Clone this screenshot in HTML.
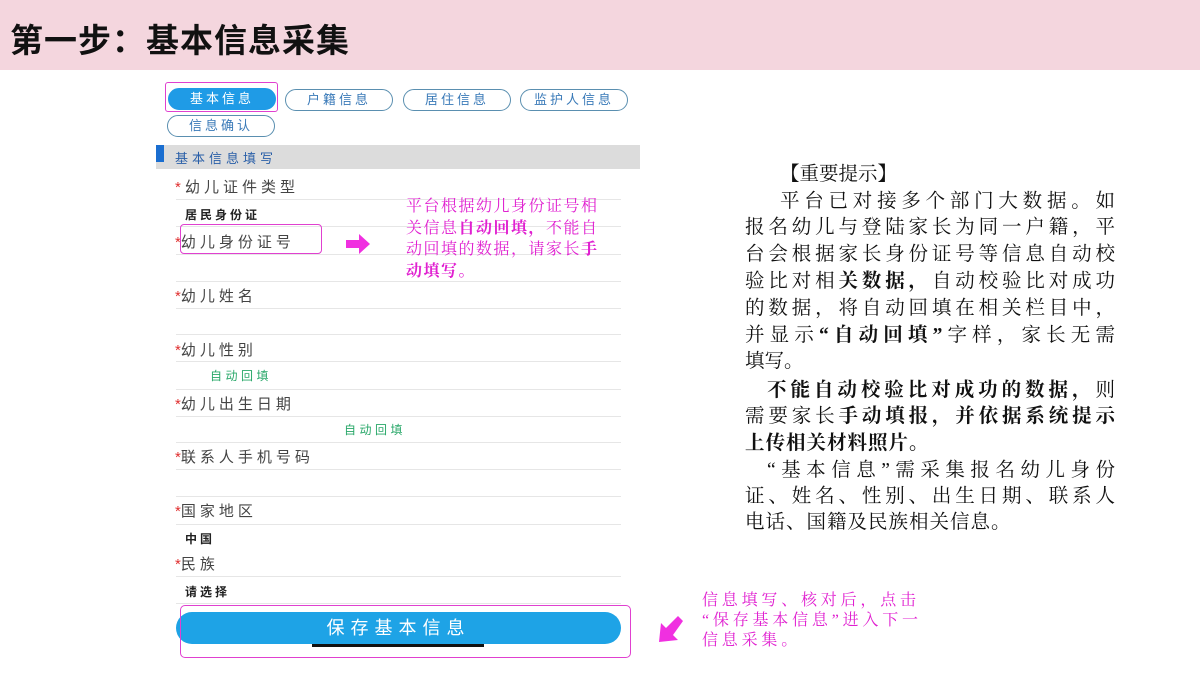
<!DOCTYPE html>
<html><head><meta charset="utf-8"><style>
*{margin:0;padding:0;box-sizing:border-box}
body{width:1200px;height:675px;position:relative;background:#fff;overflow:hidden;font-family:"Liberation Sans","Noto Sans CJK SC",sans-serif}
.a{position:absolute;white-space:nowrap}
.hdr{left:0;top:0;width:1200px;height:70px;background:#f4d6de}
.title{left:10px;top:14px;font-size:33px;font-weight:bold;color:#111;letter-spacing:1px}
.tab{position:absolute;height:22px;border:1.5px solid #5a8fb0;border-radius:11px;font-size:13px;color:#3a7ab8;text-align:center;line-height:19px;letter-spacing:3px}
.lbl{position:absolute;left:175px;font-size:15px;color:#444;letter-spacing:4px}
.lbl b{color:#e03030;font-weight:normal;letter-spacing:0}
.ln{position:absolute;left:176px;width:445px;height:1px;background:#e6e6e6}
.val{position:absolute;left:185px;font-size:12px;color:#222;font-weight:bold;letter-spacing:3px}
.g{position:absolute;font-size:12px;color:#2aa86a;letter-spacing:3.5px}
.r{position:absolute;left:745px;width:370px;font-family:"Liberation Serif","Noto Serif CJK SC",serif;font-size:19.5px;color:#111;text-align:justify;text-align-last:justify;white-space:nowrap;height:26px;line-height:26px}
.pk{color:#e020d0}
</style></head><body>
<div class="a hdr"></div>
<div class="a title">第一步：基本信息采集</div>

<div class="tab" style="left:168px;top:88px;width:108px;background:#1f9be6;border-color:#1f9be6;color:#fff">基本信息</div>
<div class="a" style="left:165px;top:82px;width:113px;height:30px;border:1.5px solid #e040d0;border-radius:3px"></div>
<div class="tab" style="left:285px;top:89px;width:108px">户籍信息</div>
<div class="tab" style="left:403px;top:89px;width:108px">居住信息</div>
<div class="tab" style="left:520px;top:89px;width:108px">监护人信息</div>
<div class="tab" style="left:167px;top:115px;width:108px">信息确认</div>

<div class="a" style="left:156px;top:145px;width:484px;height:24px;background:#dcdcdc"></div>
<div class="a" style="left:156px;top:145px;width:8px;height:17px;background:#1a6ed0"></div>
<div class="a" style="left:175px;top:148px;font-size:13px;color:#2a5fa8;letter-spacing:4px">基本信息填写</div>

<div class="lbl" style="top:176px"><b>* </b>幼儿证件类型</div>
<div class="ln" style="top:199px"></div>
<div class="val" style="top:206px">居民身份证</div>
<div class="ln" style="top:226px"></div>
<div class="lbl" style="top:231px"><b>*</b>幼儿身份证号</div>
<div class="a" style="left:180px;top:224px;width:142px;height:30px;border:1.5px solid #e040d0;border-radius:4px"></div>
<div class="ln" style="top:254px"></div>
<div class="ln" style="top:281px"></div>
<div class="lbl" style="top:285px"><b>*</b>幼儿姓名</div>
<div class="ln" style="top:308px"></div>
<div class="ln" style="top:334px"></div>
<div class="lbl" style="top:339px"><b>*</b>幼儿性别</div>
<div class="ln" style="top:361px"></div>
<div class="g" style="left:210px;top:367px">自动回填</div>
<div class="ln" style="top:389px"></div>
<div class="lbl" style="top:393px"><b>*</b>幼儿出生日期</div>
<div class="ln" style="top:416px"></div>
<div class="g" style="left:344px;top:421px">自动回填</div>
<div class="ln" style="top:442px"></div>
<div class="lbl" style="top:446px"><b>*</b>联系人手机号码</div>
<div class="ln" style="top:469px"></div>
<div class="ln" style="top:496px"></div>
<div class="lbl" style="top:500px"><b>*</b>国家地区</div>
<div class="ln" style="top:524px"></div>
<div class="val" style="top:530px">中国</div>
<div class="lbl" style="top:553px"><b>*</b>民族</div>
<div class="ln" style="top:576px"></div>
<div class="val" style="top:583px">请选择</div>
<div class="ln" style="top:603px"></div>

<div class="a" style="left:176px;top:612px;width:445px;height:32px;background:#1ea3e6;border-radius:16px;color:#fff;font-size:18px;text-align:center;line-height:32px;letter-spacing:6px">保存基本信息</div>
<div class="a" style="left:312px;top:644px;width:172px;height:3px;background:#111"></div>
<div class="a" style="left:180px;top:605px;width:451px;height:53px;border:1.5px solid #e040d0;border-radius:5px"></div>

<svg class="a" style="left:346px;top:234px" width="26" height="20"><polygon points="0,6 13,6 13,0 24,10 13,20 13,14 0,14" fill="#f030e0"/></svg>
<div class="a pk" style="left:406px;top:196px;font-family:'Liberation Serif','Noto Serif CJK SC',serif;font-size:16px;line-height:21.5px;letter-spacing:1.5px">平台根据幼儿身份证号相<br>关信息<b>自动回填，</b>不能自<br>动回填的数据，请家长<b>手<br>动填写。</b></div>

<div class="r" style="top:162px;left:780px;width:auto;text-align-last:auto">【重要提示】</div>
<div class="r" style="top:189px;left:780px;width:335px">平台已对接多个部门大数据。如</div>
<div class="r" style="top:215px">报名幼儿与登陆家长为同一户籍，平</div>
<div class="r" style="top:242px">台会根据家长身份证号等信息自动校</div>
<div class="r" style="top:269px">验比对相<b>关数据，</b>自动校验比对成功</div>
<div class="r" style="top:296px">的数据，将自动回填在相关栏目中，</div>
<div class="r" style="top:323px">并显示<b>“自动回填”</b>字样，家长无需</div>
<div class="r" style="top:349px;width:auto;text-align-last:auto">填写。</div>
<div class="r" style="top:378px;left:767px;width:348px"><b>不能自动校验比对成功的数据，</b>则</div>
<div class="r" style="top:404px">需要家长<b>手动填报，并依据系统提示</b></div>
<div class="r" style="top:431px;width:auto;text-align-last:auto;letter-spacing:1px"><b>上传相关材料照片。</b></div>
<div class="r" style="top:458px;left:767px;width:348px">“基本信息”需采集报名幼儿身份</div>
<div class="r" style="top:484px">证、姓名、性别、出生日期、联系人</div>
<div class="r" style="top:510px;width:auto;text-align-last:auto;letter-spacing:1px">电话、国籍及民族相关信息。</div>

<svg class="a" style="left:657px;top:616px" width="28" height="28"><polygon points="26,5 21,0 9,12 4,7 2,26 21,24 16,19" fill="#f030e0"/></svg>
<div class="a pk" style="left:702px;top:591px;font-family:'Liberation Serif','Noto Serif CJK SC',serif;font-size:16px;line-height:20px;letter-spacing:3.8px">信息填写、核对后，点击<br>“保存基本信息”进入下一<br>信息采集。</div>
</body></html>
